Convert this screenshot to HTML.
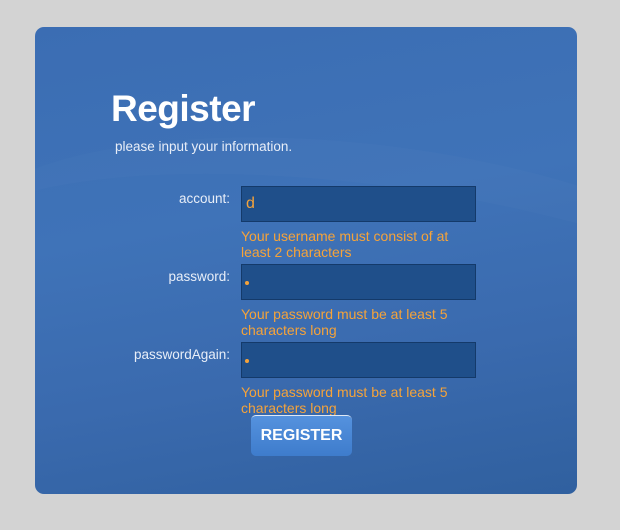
<!DOCTYPE html>
<html><head><style>
body{margin:0;width:620px;height:530px;background:#d3d3d3;position:relative;overflow:hidden;font-family:"Liberation Sans",Arial,sans-serif}
.panel{position:absolute;left:35px;top:27px;width:542px;height:467px;border-radius:9px;background:linear-gradient(170deg,#3b6db3 0%,#3f73b8 40%,#3a6aae 70%,#30609f 100%);overflow:hidden}
.sw{position:absolute;left:-100px;top:120px;width:900px;height:300px;border-radius:50%;border-top:40px solid rgba(255,255,255,0.02);transform:rotate(8deg)}
.t{position:absolute;left:111px;top:88px;font-size:37px;font-weight:bold;color:#fff;letter-spacing:-0.5px}
.s{position:absolute;left:115px;top:139px;font-size:13.5px;color:#e8eef8}
.l{position:absolute;right:390px;font-size:13.5px;color:#e8eef8}
.i{position:absolute;left:241px;width:233px;height:34px;background:#1f4f8a;border:1px solid #143a6a}
.e{position:absolute;left:241px;font-size:14px;line-height:16px;color:#f5a33a}
.b{position:absolute;left:251px;top:415px;width:101px;height:41px;border-radius:5px;background:linear-gradient(#5592de,#3e7ccc);border-top:1px solid #dfe8f5;box-sizing:border-box;color:#fff;font-weight:bold;font-size:16px;text-align:center;line-height:40px}
.d{position:absolute;left:245px;width:4px;height:4px;border-radius:50%;background:#f5a33a}
</style></head><body>
<div class="panel"><div class="sw"></div></div>
<div class="t">Register</div>
<div class="s">please input your information.</div>
<div class="l" style="top:191px">account:</div>
<div class="i" style="top:186px"></div>
<div style="position:absolute;left:246px;top:195px;font-size:16px;color:#f5a33a">d</div>
<div class="e" style="top:228px">Your username must consist of at<br>least 2 characters</div>
<div class="l" style="top:269px">password:</div>
<div class="i" style="top:264px"></div>
<div class="d" style="top:281px"></div>
<div class="e" style="top:306px">Your password must be at least 5<br>characters long</div>
<div class="l" style="top:347px">passwordAgain:</div>
<div class="i" style="top:342px"></div>
<div class="d" style="top:359px"></div>
<div class="e" style="top:384px">Your password must be at least 5<br>characters long</div>
<div class="b">REGISTER</div>
</body></html>
